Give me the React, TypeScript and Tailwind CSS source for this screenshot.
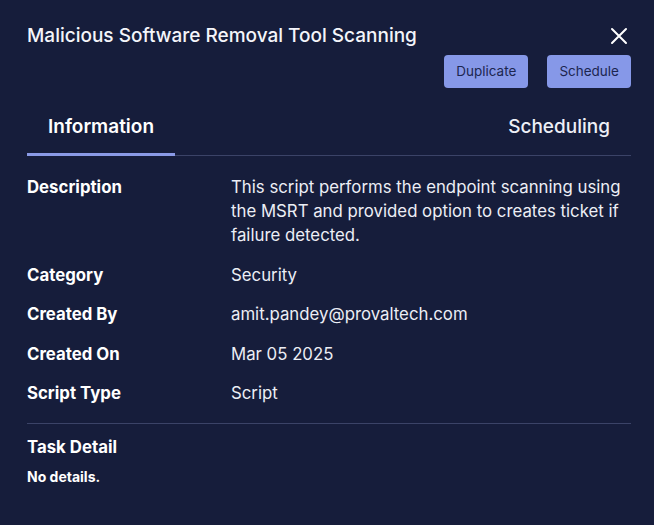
import React from "react";

const rows: [string, string][] = [
  ["Category", "Security"],
  ["Created By", "amit.pandey@provaltech.com"],
  ["Created On", "Mar 05 2025"],
  ["Script Type", "Script"],
];

export default function App() {
  return (
    <div
      className="w-[654px] h-[525px] bg-[#161d3b] text-white pl-[27px] pr-[23px] overflow-hidden"
      style={{ fontFamily: "Inter, 'Noto Sans', sans-serif" }}
    >
      <div className="flex items-center justify-between pt-[22px]">
        <h1 className="text-[19px] leading-[28px] font-medium text-[#f4f5fa]">
          Malicious Software Removal Tool Scanning
        </h1>
        <button className="w-[22px] h-[22px] flex items-center justify-center mr-[1px]">
          <svg width="18" height="18" viewBox="0 0 18 18" fill="none" stroke="white" strokeWidth="2" strokeLinecap="round">
            <path d="M2 2 L16 16 M16 2 L2 16" />
          </svg>
        </button>
      </div>
      <div className="flex justify-end gap-[19px] mt-[5px]">
        <button className="h-[33px] px-[12px] rounded-[4px] bg-[#8698e8] text-[#1c2650] text-[13.5px]">
          Duplicate
        </button>
        <button className="h-[33px] px-[12px] rounded-[4px] bg-[#8698e8] text-[#1c2650] text-[13.5px]">
          Schedule
        </button>
      </div>
      <div className="flex justify-between border-b border-[#3b4367] mt-[13px]">
        <div className="px-[21px] pt-[12px] pb-[13px] border-b-[3px] border-[#8a9ae6] -mb-[1px] text-[19px] leading-[27px] font-semibold">
          Information
        </div>
        <div className="px-[21px] pt-[12px] pb-[13px] text-[19px] leading-[27px] font-medium text-[#eef0f7]">
          Scheduling
        </div>
      </div>
      <div className="pt-[19px] text-[16.8px] leading-[24px]">
        <div className="flex">
          <div className="w-[204px] font-bold">Description</div>
          <div className="flex-1 text-[#eceef5]">
            This script performs the endpoint scanning using the MSRT and provided option to creates ticket if failure detected.
          </div>
        </div>
        {rows.map(([k, v]) => (
          <div key={k} className="flex mt-[15.5px]">
            <div className="w-[204px] font-bold">{k}</div>
            <div className="flex-1 text-[#eceef5]">{v}</div>
          </div>
        ))}
      </div>
      <div className="border-t border-[#3b4367] mt-[18px] pt-[11px]">
        <div className="text-[16.8px] leading-[24px] font-bold">Task Detail</div>
        <div className="text-[14px] leading-[20px] font-bold mt-[8px]">No details.</div>
      </div>
    </div>
  );
}
